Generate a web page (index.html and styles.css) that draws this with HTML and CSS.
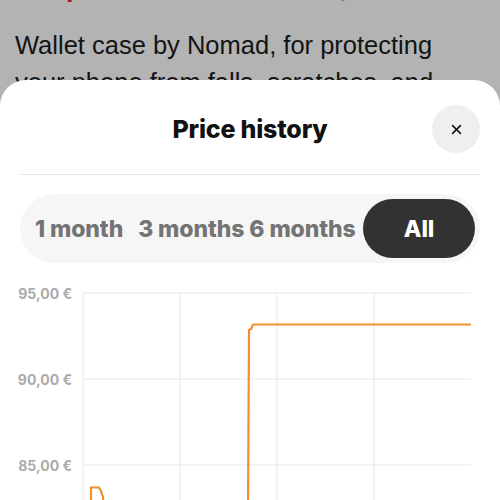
FILE: index.html
```html
<!DOCTYPE html>
<html lang="en">
<head>
<meta charset="utf-8">
<link rel="stylesheet" href="styles.css">
</head>
<body>
<div class="page">
  <h1 class="product-title">Shop Nomad Wallet Case, Black</h1>
  <p class="description">Wallet case by Nomad, for protecting your phone from falls, scratches, and everyday wear.</p>
</div>
<div class="sheet">
  <div class="sheet-header">
    <h2 class="sheet-title">Price history</h2>
    <button class="close-btn" aria-label="Close">
      <svg width="14" height="14" viewBox="0 0 14 14"><path d="M2 2L12 12M12 2L2 12" stroke="#111" stroke-width="2" stroke-linecap="round"/></svg>
    </button>
  </div>
  <div class="divider"></div>
  <div class="segments">
    <span class="segment">1 month</span>
    <span class="segment">3 months</span>
    <span class="segment">6 months</span>
    <span class="segment active">All</span>
  </div>
  <svg class="chart" width="500" height="220" viewBox="0 280 500 220">
    <g class="grid" stroke="#e8e8e8" stroke-width="1">
      <line x1="83" y1="293" x2="471" y2="293"/>
      <line x1="83" y1="379" x2="471" y2="379"/>
      <line x1="83" y1="465" x2="471" y2="465"/>
      <line x1="83" y1="293" x2="83" y2="500"/>
      <line x1="180" y1="293" x2="180" y2="500"/>
      <line x1="277" y1="293" x2="277" y2="500"/>
      <line x1="374" y1="293" x2="374" y2="500"/>
    </g>
    <g class="labels">
      <text x="72" y="299" text-anchor="end">95,00 €</text>
      <text x="72" y="385" text-anchor="end">90,00 €</text>
      <text x="72" y="471" text-anchor="end">85,00 €</text>
    </g>
    <polyline fill="none" stroke="#f0902a" stroke-width="2.2" stroke-linejoin="round" points="91,510 91,487.5 99,487.5 101,491 103,497 104,510"/>
    <polyline fill="none" stroke="#f0902a" stroke-width="2.2" stroke-linejoin="round" points="248,510 249,330 251,329 253,324.5 471,324.5"/>
  </svg>
</div>
</body>
</html>
```
FILE: styles.css
```css
html, body {
  margin: 0;
  padding: 0;
  width: 500px;
  height: 500px;
  overflow: hidden;
  background: #b3b3b3;
}

.page {
  padding: 0 15px;
  font-family: "Liberation Sans", Arial, sans-serif;
}

.product-title {
  margin: -31px 0 0;
  font-size: 27px;
  line-height: 36px;
  font-weight: 700;
  color: #a3181e;
  white-space: nowrap;
}

.description {
  margin: 22px 0 0;
  width: 430px;
  font-size: 25.5px;
  line-height: 37px;
  color: #131313;
}

.sheet {
  position: absolute;
  left: 0;
  top: 80px;
  width: 500px;
  height: 420px;
  background: #fff;
  border-radius: 26px 26px 0 0;
  font-family: Inter, "Noto Sans", sans-serif;
  overflow: hidden;
}

.sheet-header {
  display: flex;
  align-items: center;
  justify-content: center;
  height: 48px;
  margin-top: 25px;
  padding: 0 20px;
}

.sheet-title {
  margin: 0 auto;
  padding-left: 48px;
  font-size: 25px;
  font-weight: 800;
  color: #111;
  letter-spacing: -0.2px;
}

.close-btn {
  flex: none;
  width: 48px;
  height: 48px;
  border-radius: 50%;
  border: none;
  background: #efefef;
  display: flex;
  align-items: center;
  justify-content: center;
  padding: 0;
}

.close-btn svg {
  width: 11px;
  height: 11px;
}

.divider {
  height: 1px;
  background: #e6e6e6;
  margin: 21px 20px 0;
}

.segments {
  display: flex;
  align-items: center;
  margin: 19px 20px 0;
  height: 69px;
  padding: 0 5px 0 15px;
  border-radius: 35px;
  background: #f6f6f6;
  box-sizing: border-box;
}

.segment {
  font-size: 23px;
  font-weight: 800;
  color: #747474;
  letter-spacing: -0.1px;
  white-space: nowrap;
}

.segment + .segment {
  margin-left: 15px;
}

.segment:nth-child(3) {
  margin-left: 5px;
}

.segment.active {
  margin-left: auto;
  width: 112px;
  height: 59px;
  border-radius: 30px;
  background: #323232;
  color: #fff;
  display: flex;
  align-items: center;
  justify-content: center;
}

.chart {
  display: block;
  margin-top: 17px;
}

.labels text {
  font-family: Inter, "Noto Sans", sans-serif;
  font-size: 14px;
  font-weight: 700;
  fill: #ababab;
}
```
